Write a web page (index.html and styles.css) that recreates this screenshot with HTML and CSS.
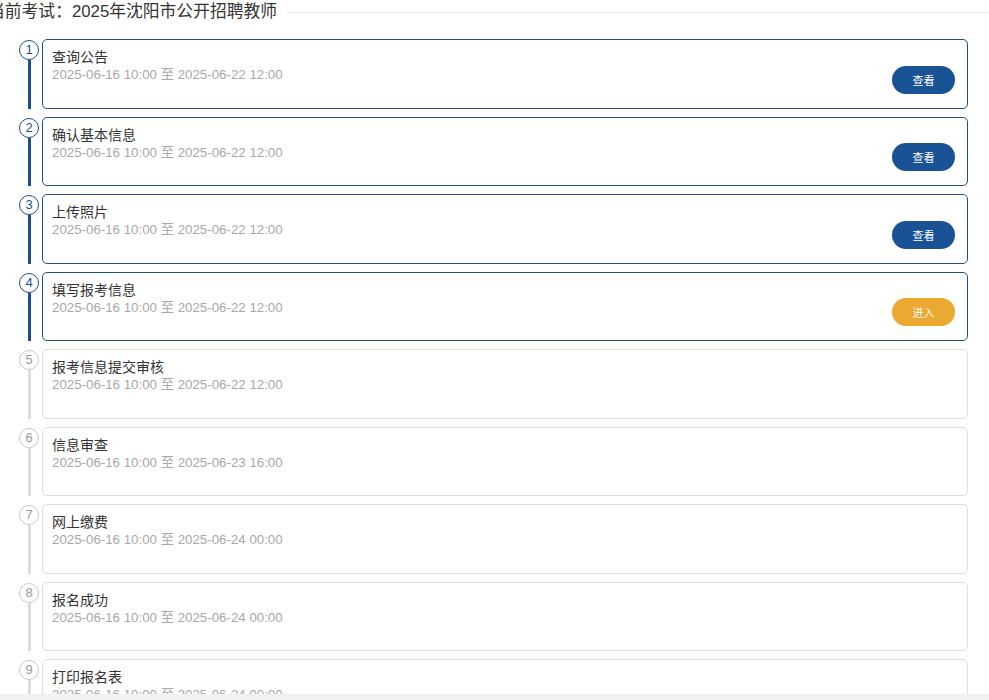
FILE: index.html
```html
<!DOCTYPE html>
<html lang="zh-CN">
<head>
    <meta charset="UTF-8">
    <meta name="viewport" content="width=device-width, initial-scale=1.0">
    <title>报名流程</title>
    <link rel="stylesheet" href="styles.css">
</head>
<body>
    <div class="exam-head">
        <span class="exam-title">当前考试：2025年沈阳市公开招聘教师</span>
        <span class="exam-rule"></span>
    </div>

    <ul class="steps">
        <li class="step done">
            <div class="step-marker"><span class="step-num">1</span><span class="step-line"></span></div>
            <div class="step-card">
                <div class="step-info">
                    <div class="step-name">查询公告</div>
                    <div class="step-time">2025-06-16 10:00 至 2025-06-22 12:00</div>
                </div>
                <div class="step-action"><button class="btn btn-view">查看</button></div>
            </div>
        </li>
        <li class="step done">
            <div class="step-marker"><span class="step-num">2</span><span class="step-line"></span></div>
            <div class="step-card">
                <div class="step-info">
                    <div class="step-name">确认基本信息</div>
                    <div class="step-time">2025-06-16 10:00 至 2025-06-22 12:00</div>
                </div>
                <div class="step-action"><button class="btn btn-view">查看</button></div>
            </div>
        </li>
        <li class="step done">
            <div class="step-marker"><span class="step-num">3</span><span class="step-line"></span></div>
            <div class="step-card">
                <div class="step-info">
                    <div class="step-name">上传照片</div>
                    <div class="step-time">2025-06-16 10:00 至 2025-06-22 12:00</div>
                </div>
                <div class="step-action"><button class="btn btn-view">查看</button></div>
            </div>
        </li>
        <li class="step done">
            <div class="step-marker"><span class="step-num">4</span><span class="step-line"></span></div>
            <div class="step-card">
                <div class="step-info">
                    <div class="step-name">填写报考信息</div>
                    <div class="step-time">2025-06-16 10:00 至 2025-06-22 12:00</div>
                </div>
                <div class="step-action"><button class="btn btn-enter">进入</button></div>
            </div>
        </li>
        <li class="step">
            <div class="step-marker"><span class="step-num">5</span><span class="step-line"></span></div>
            <div class="step-card">
                <div class="step-info">
                    <div class="step-name">报考信息提交审核</div>
                    <div class="step-time">2025-06-16 10:00 至 2025-06-22 12:00</div>
                </div>
            </div>
        </li>
        <li class="step">
            <div class="step-marker"><span class="step-num">6</span><span class="step-line"></span></div>
            <div class="step-card">
                <div class="step-info">
                    <div class="step-name">信息审查</div>
                    <div class="step-time">2025-06-16 10:00 至 2025-06-23 16:00</div>
                </div>
            </div>
        </li>
        <li class="step">
            <div class="step-marker"><span class="step-num">7</span><span class="step-line"></span></div>
            <div class="step-card">
                <div class="step-info">
                    <div class="step-name">网上缴费</div>
                    <div class="step-time">2025-06-16 10:00 至 2025-06-24 00:00</div>
                </div>
            </div>
        </li>
        <li class="step">
            <div class="step-marker"><span class="step-num">8</span><span class="step-line"></span></div>
            <div class="step-card">
                <div class="step-info">
                    <div class="step-name">报名成功</div>
                    <div class="step-time">2025-06-16 10:00 至 2025-06-24 00:00</div>
                </div>
            </div>
        </li>
        <li class="step">
            <div class="step-marker"><span class="step-num">9</span><span class="step-line"></span></div>
            <div class="step-card">
                <div class="step-info">
                    <div class="step-name">打印报名表</div>
                    <div class="step-time">2025-06-16 10:00 至 2025-06-24 00:00</div>
                </div>
            </div>
        </li>
    </ul>

    <div class="hscroll"></div>
</body>
</html>
```

FILE: styles.css
```css
html, body {
    margin: 0;
    padding: 0;
    height: 700px;
    overflow: hidden;
    background-color: #fff;
}

body {
    font-family: "Liberation Sans", Arial, "Noto Sans CJK SC", sans-serif;
    color: #333;
}

.exam-head {
    display: flex;
    align-items: center;
    height: 24px;
    margin-left: -12px;
}

.exam-title {
    font-size: 16.8px;
    line-height: 24px;
    white-space: nowrap;
    color: #333;
    padding-right: 10px;
}

.exam-rule {
    flex: 1;
    height: 1px;
    background-color: #e6e6e6;
}

.steps {
    list-style: none;
    margin: 15px 0 0 0;
    padding: 0 21px 0 19px;
}

.step {
    display: flex;
    padding-bottom: 8px;
}

.step-marker {
    width: 20px;
    margin-right: 3px;
    padding-top: 1px;
    display: flex;
    flex-direction: column;
    align-items: center;
}

.step-num {
    width: 20px;
    height: 20px;
    box-sizing: border-box;
    border: 1px solid #c8c8c8;
    border-radius: 50%;
    background-color: #fff;
    color: #999;
    font-size: 13px;
    line-height: 18px;
    text-align: center;
}

.step-line {
    flex: 1;
    width: 3px;
    background-color: #ddd;
}

.step.done .step-num {
    border-color: #1d4f8c;
    color: #1d4f8c;
}

.step.done .step-line {
    background-color: #1d4f8c;
}

.step-card {
    flex: 1;
    display: flex;
    height: 69.5px;
    box-sizing: border-box;
    padding: 7px 12px 14px 9px;
    border: 1px solid #ddd;
    border-radius: 5px;
}

.step.done .step-card {
    border-color: #1d4f8c;
}

.step-info {
    flex: 1;
}

.step-name {
    font-size: 14px;
    line-height: 20px;
    color: #333;
}

.step-time {
    font-size: 13.3px;
    line-height: 16px;
    color: #a8a8a8;
}

.step-action {
    align-self: flex-end;
}

.btn {
    width: 63px;
    height: 28px;
    border: none;
    border-radius: 14px;
    color: #fff;
    font-family: inherit;
    font-size: 11px;
    padding: 0;
    cursor: pointer;
}

.btn-view {
    background-color: #1a5395;
}

.btn-enter {
    background-color: #eaa930;
}

.hscroll {
    position: fixed;
    left: 0;
    right: 0;
    bottom: 0;
    height: 6px;
    background-color: #f1f1f1;
}
```
